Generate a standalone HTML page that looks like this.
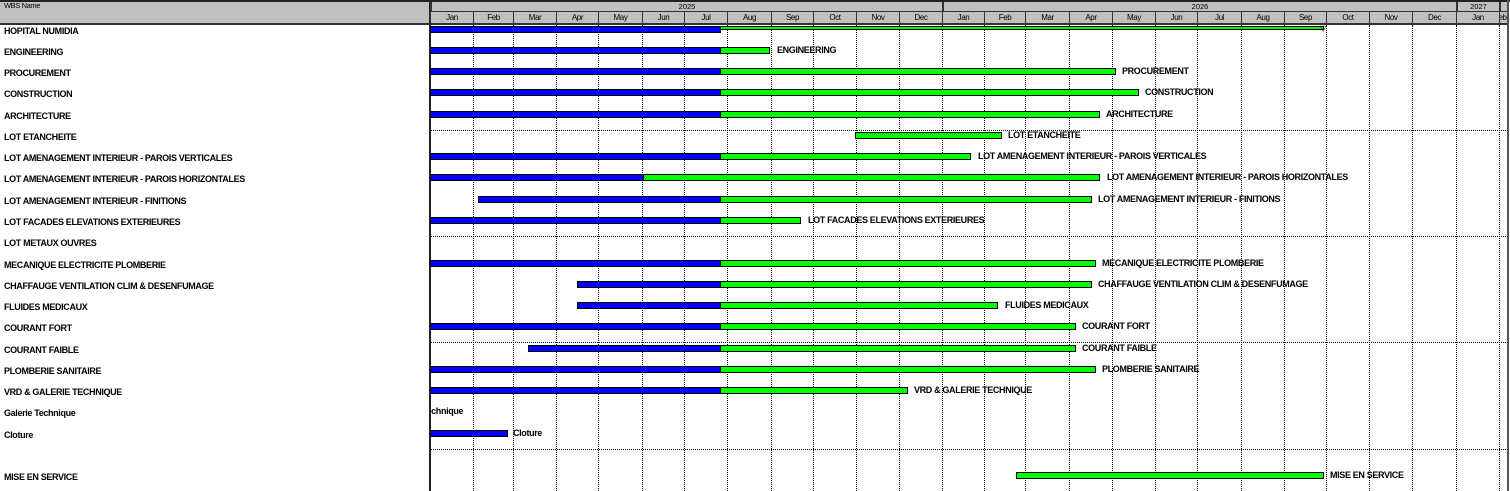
<!DOCTYPE html>
<html><head><meta charset="utf-8"><style>
*{margin:0;padding:0;box-sizing:border-box}
body{width:1510px;height:491px;background:#fff;position:relative;overflow:hidden;font-family:"Liberation Sans",Arial,sans-serif;}
.a{position:absolute}
.hd{background:#c0c0c0}
.m{position:absolute;top:12px;height:11px;font-size:8px;line-height:11px;text-align:center;border-left:1px solid #333;letter-spacing:-0.4px}
.y{position:absolute;top:2px;height:9px;font-size:7.5px;line-height:9px;text-align:center;border-left:2px solid #333}
.v{position:absolute;top:25px;height:466px;border-left:1px dotted #000}
.h{position:absolute;left:430px;width:1078px;border-top:1px dotted #000}
.n{position:absolute;left:4px;font-size:9px;font-weight:bold;line-height:12px;letter-spacing:-0.35px;top:1px}
.b{position:absolute;height:7px;background:#0000ff;border:1px solid #000}
.g{position:absolute;height:7px;background:#00ff00;border:1px solid #000}
.l{position:absolute;font-size:9px;font-weight:bold;line-height:12px;letter-spacing:-0.35px;white-space:nowrap}
</style></head><body>
<div class="a" style="left:0;top:0;width:1510px;height:2px;background:#222"></div>
<div class="a hd" style="left:0;top:2px;width:430px;height:21px;border-right:1px solid #555"></div>
<div class="a" style="left:4px;top:1px;font-size:7.5px;letter-spacing:-0.4px">WBS Name</div>
<div class="a hd" style="left:430px;top:2px;width:1078px;height:21px"></div>
<div class="a" style="left:430px;top:11px;width:1078px;height:1px;background:#333"></div>
<div class="a" style="left:0;top:23px;width:1508px;height:2px;background:#333"></div>
<div class="a" style="left:429px;top:0;width:2px;height:491px;background:#222"></div>
<div class="a" style="left:1507px;top:0;width:2px;height:491px;background:#555"></div>
<div class="y" style="left:430px;width:512px">2025</div>
<div class="y" style="left:942px;width:514px">2026</div>
<div class="y" style="left:1456px;width:43px">2027</div>
<div class="y" style="left:1499px;width:8px"></div>
<div class="m" style="left:430px;width:43px">Jan</div>
<div class="m" style="left:473px;width:40px">Feb</div>
<div class="m" style="left:513px;width:43px">Mar</div>
<div class="m" style="left:556px;width:42px">Apr</div>
<div class="m" style="left:598px;width:44px">May</div>
<div class="m" style="left:642px;width:42px">Jun</div>
<div class="m" style="left:684px;width:43px">Jul</div>
<div class="m" style="left:727px;width:44px">Aug</div>
<div class="m" style="left:771px;width:42px">Sep</div>
<div class="m" style="left:813px;width:43px">Oct</div>
<div class="m" style="left:856px;width:43px">Nov</div>
<div class="m" style="left:899px;width:43px">Dec</div>
<div class="m" style="left:942px;width:42px">Jan</div>
<div class="m" style="left:984px;width:41px">Feb</div>
<div class="m" style="left:1025px;width:44px">Mar</div>
<div class="m" style="left:1069px;width:43px">Apr</div>
<div class="m" style="left:1112px;width:43px">May</div>
<div class="m" style="left:1155px;width:42px">Jun</div>
<div class="m" style="left:1197px;width:44px">Jul</div>
<div class="m" style="left:1241px;width:43px">Aug</div>
<div class="m" style="left:1284px;width:42px">Sep</div>
<div class="m" style="left:1326px;width:43px">Oct</div>
<div class="m" style="left:1369px;width:43px">Nov</div>
<div class="m" style="left:1412px;width:44px">Dec</div>
<div class="m" style="left:1456px;width:43px">Jan</div>
<div class="m" style="left:1499px;width:8px;overflow:hidden;text-align:left;text-indent:-6px">Feb</div>

<div class="v" style="left:473px"></div><div class="v" style="left:513px"></div><div class="v" style="left:556px"></div><div class="v" style="left:598px"></div><div class="v" style="left:642px"></div><div class="v" style="left:684px"></div><div class="v" style="left:727px"></div><div class="v" style="left:771px"></div><div class="v" style="left:813px"></div><div class="v" style="left:856px"></div><div class="v" style="left:899px"></div><div class="v" style="left:942px"></div><div class="v" style="left:984px"></div><div class="v" style="left:1025px"></div><div class="v" style="left:1069px"></div><div class="v" style="left:1112px"></div><div class="v" style="left:1155px"></div><div class="v" style="left:1197px"></div><div class="v" style="left:1241px"></div><div class="v" style="left:1284px"></div><div class="v" style="left:1326px"></div><div class="v" style="left:1369px"></div><div class="v" style="left:1412px"></div><div class="v" style="left:1456px"></div><div class="v" style="left:1499px"></div>
<div class="h" style="top:130px"></div><div class="h" style="top:236px"></div><div class="h" style="top:342px"></div><div class="h" style="top:449px"></div>

<div class="n" style="top:25px">HOPITAL NUMIDIA</div>
<div class="n" style="top:46px">ENGINEERING</div>
<div class="n" style="top:67px">PROCUREMENT</div>
<div class="n" style="top:88px">CONSTRUCTION</div>
<div class="n" style="top:110px">ARCHITECTURE</div>
<div class="n" style="top:131px">LOT ETANCHEITE</div>
<div class="n" style="top:152px">LOT AMENAGEMENT INTERIEUR - PAROIS VERTICALES</div>
<div class="n" style="top:173px">LOT AMENAGEMENT INTERIEUR - PAROIS HORIZONTALES</div>
<div class="n" style="top:195px">LOT AMENAGEMENT INTERIEUR - FINITIONS</div>
<div class="n" style="top:216px">LOT FACADES ELEVATIONS EXTERIEURES</div>
<div class="n" style="top:237px">LOT METAUX OUVRES</div>
<div class="n" style="top:259px">MECANIQUE ELECTRICITE PLOMBERIE</div>
<div class="n" style="top:280px">CHAFFAUGE VENTILATION CLIM &amp; DESENFUMAGE</div>
<div class="n" style="top:301px">FLUIDES MEDICAUX</div>
<div class="n" style="top:322px">COURANT FORT</div>
<div class="n" style="top:344px">COURANT FAIBLE</div>
<div class="n" style="top:365px">PLOMBERIE SANITAIRE</div>
<div class="n" style="top:386px">VRD &amp; GALERIE TECHNIQUE</div>
<div class="n" style="top:407px">Galerie Technique</div>
<div class="n" style="top:429px">Cloture</div>
<div class="n" style="top:471px">MISE EN SERVICE</div>

<div class="b" style="left:430px;top:26px;width:291px"></div>
<div class="a" style="left:720px;top:26px;width:604px;height:4px;background:#00ff00;border:1px solid #000"></div>
<div class="a" style="left:1320px;top:25px;font-size:8px;line-height:8px">▽</div>
<div class="b" style="left:430px;top:47px;width:291px"></div><div class="g" style="left:720px;top:47px;width:50px"></div><div class="l" style="left:777px;top:44px">ENGINEERING</div>
<div class="b" style="left:430px;top:68px;width:291px"></div><div class="g" style="left:720px;top:68px;width:396px"></div><div class="l" style="left:1122px;top:65px">PROCUREMENT</div>
<div class="b" style="left:430px;top:89px;width:291px"></div><div class="g" style="left:720px;top:89px;width:419px"></div><div class="l" style="left:1145px;top:86px">CONSTRUCTION</div>
<div class="b" style="left:430px;top:111px;width:291px"></div><div class="g" style="left:720px;top:111px;width:380px"></div><div class="l" style="left:1106px;top:108px">ARCHITECTURE</div>
<div class="g" style="left:855px;top:132px;width:147px"></div><div class="l" style="left:1008px;top:129px">LOT ETANCHEITE</div>
<div class="b" style="left:430px;top:153px;width:291px"></div><div class="g" style="left:720px;top:153px;width:251px"></div><div class="l" style="left:978px;top:150px">LOT AMENAGEMENT INTERIEUR - PAROIS VERTICALES</div>
<div class="b" style="left:430px;top:174px;width:214px"></div><div class="g" style="left:643px;top:174px;width:457px"></div><div class="l" style="left:1107px;top:171px">LOT AMENAGEMENT INTERIEUR - PAROIS HORIZONTALES</div>
<div class="b" style="left:478px;top:196px;width:243px"></div><div class="g" style="left:720px;top:196px;width:372px"></div><div class="l" style="left:1098px;top:193px">LOT AMENAGEMENT INTERIEUR - FINITIONS</div>
<div class="b" style="left:430px;top:217px;width:291px"></div><div class="g" style="left:720px;top:217px;width:81px"></div><div class="l" style="left:808px;top:214px">LOT FACADES ELEVATIONS EXTERIEURES</div>
<div class="b" style="left:430px;top:260px;width:291px"></div><div class="g" style="left:720px;top:260px;width:376px"></div><div class="l" style="left:1102px;top:257px">MECANIQUE ELECTRICITE PLOMBERIE</div>
<div class="b" style="left:577px;top:281px;width:144px"></div><div class="g" style="left:720px;top:281px;width:372px"></div><div class="l" style="left:1098px;top:278px">CHAFFAUGE VENTILATION CLIM &amp; DESENFUMAGE</div>
<div class="b" style="left:577px;top:302px;width:144px"></div><div class="g" style="left:720px;top:302px;width:278px"></div><div class="l" style="left:1005px;top:299px">FLUIDES MEDICAUX</div>
<div class="b" style="left:430px;top:323px;width:291px"></div><div class="g" style="left:720px;top:323px;width:356px"></div><div class="l" style="left:1082px;top:320px">COURANT FORT</div>
<div class="b" style="left:528px;top:345px;width:193px"></div><div class="g" style="left:720px;top:345px;width:356px"></div><div class="l" style="left:1082px;top:342px">COURANT FAIBLE</div>
<div class="b" style="left:430px;top:366px;width:291px"></div><div class="g" style="left:720px;top:366px;width:376px"></div><div class="l" style="left:1102px;top:363px">PLOMBERIE SANITAIRE</div>
<div class="b" style="left:430px;top:387px;width:291px"></div><div class="g" style="left:720px;top:387px;width:188px"></div><div class="l" style="left:914px;top:384px">VRD &amp; GALERIE TECHNIQUE</div>
<div class="a" style="left:431px;top:405px;width:40px;height:12px;overflow:hidden"><div class="l" style="left:-9px;top:0">Technique</div></div>
<div class="b" style="left:430px;top:430px;width:78px"></div><div class="l" style="left:513px;top:427px">Cloture</div>
<div class="g" style="left:1016px;top:472px;width:308px"></div><div class="l" style="left:1330px;top:469px">MISE EN SERVICE</div>
</body></html>
